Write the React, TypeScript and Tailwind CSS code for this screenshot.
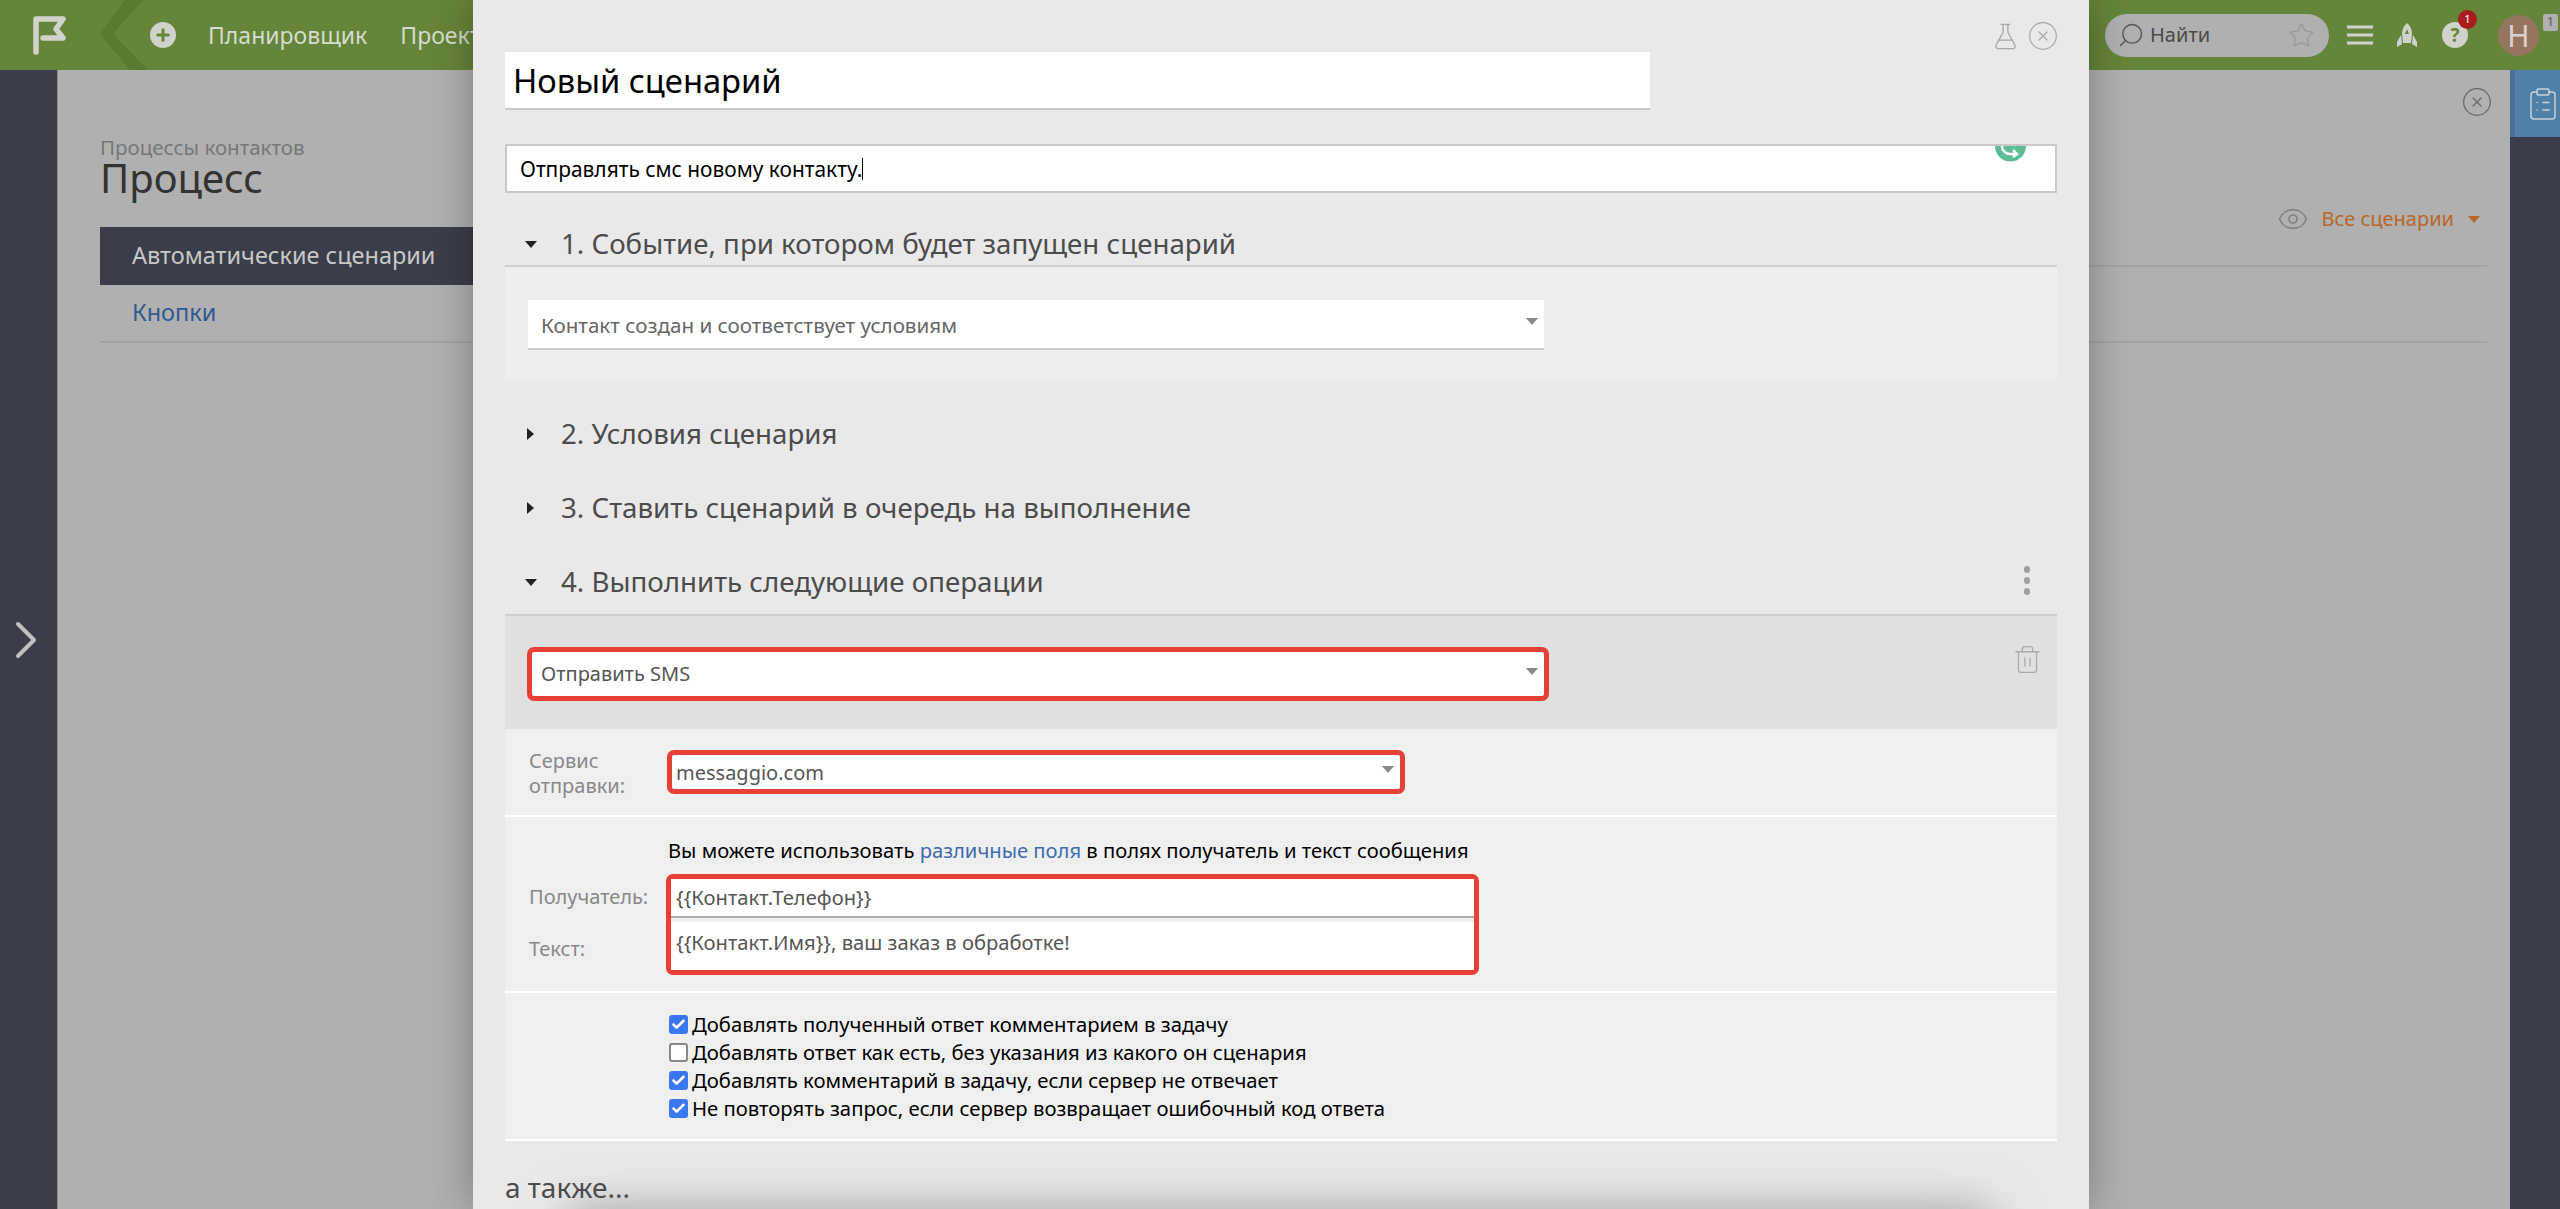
import { Plus, Search, Star, ChevronRight, Eye, CircleX, FlaskConical, ClipboardList, Trash2, Check } from "lucide-react";

const Caret = ({ open }: { open: boolean }) =>
  open ? (
    <span className="block w-0 h-0 border-x-[6px] border-x-transparent border-t-[7px] border-t-[#222]" />
  ) : (
    <span className="block w-0 h-0 ml-[2px] border-y-[6px] border-y-transparent border-l-[7px] border-l-[#222]" />
  );

const SelectArrow = () => (
  <span className="block w-0 h-0 border-x-[6px] border-x-transparent border-t-[7px] border-t-[#888]" />
);

const SectionHead = ({ title, open, border, tall }: { title: string; open: boolean; border?: boolean; tall?: boolean }) => (
  <div className={`flex items-center pl-[20px] ${tall ? "h-[55px] pb-[11px]" : "h-[44px]"} ${border ? "border-b-2 border-[#cfcfcf]" : ""}`}>
    <span className="w-[36px] flex"><Caret open={open} /></span>
    <span className="text-[27.700px] text-[#4c4c4c]">{title}</span>
  </div>
);

const checks = [
  { label: "Добавлять полученный ответ комментарием в задачу", on: true },
  { label: "Добавлять ответ как есть, без указания из какого он сценария", on: false },
  { label: "Добавлять комментарий в задачу, если сервер не отвечает", on: true },
  { label: "Не повторять запрос, если сервер возвращает ошибочный код ответа", on: true },
];

const Header = () => (
  <div className="h-[70px] bg-[#65853a] flex items-center relative text-[#d6dccd] text-[23px]">
    <div className="w-[473px] flex items-center overflow-hidden h-full relative">
      <svg width="34" height="40" viewBox="0 0 34 40" className="ml-[33px] shrink-0">
        <path d="M3 37V4h27l-7 10 7 9H10" fill="none" stroke="#d0d3cb" strokeWidth="5.5" strokeLinejoin="round" strokeLinecap="round" />
      </svg>
      <svg width="50" height="70" viewBox="0 0 50 70" className="shrink-0 ml-[33px]">
        <path d="M43 0L13 34 48 70H30L0 34 25 0z" fill="#5a7a32" />
      </svg>
      <span className="shrink-0 w-[26px] h-[26px] rounded-full bg-[#d0d3cb] flex items-center justify-center">
        <Plus size={18} strokeWidth={4} className="text-[#65853a]" />
      </span>
      <span className="ml-[32px] shrink-0">Планировщик</span>
      <span className="ml-[33px] shrink-0">Проекты</span>
    </div>
    <div className="ml-auto flex items-center h-full text-[20px]">
      <div className="w-[224px] h-[43px] rounded-full bg-[#b0b0b0] flex items-center pl-[12px] pr-[14px] text-[#4a4a4a]">
        <Search size={28} strokeWidth={1.2} className="-scale-x-100 text-[#555]" />
        <span className="ml-[5px]">Найти</span>
        <Star size={27} strokeWidth={1.2} className="ml-auto text-[#999]" />
      </div>
      <svg width="26" height="20" viewBox="0 0 26 20" className="ml-[18px]">
        <path d="M0 2h26M0 10h26M0 18h26" stroke="#d0d3cb" strokeWidth="3" />
      </svg>
      <svg width="20" height="25" viewBox="0 0 20 25" className="ml-[24px]">
        <path d="M10 0c3.500 3 5 7 5 11l-1 9H6l-1-9C5 7 6.500 3 10 0z" fill="#d0d3cb" />
        <path d="M4 12L0 19v5l5-3zM16 12l4 7v5l-5-3z" fill="#d0d3cb" />
        <path d="M10 6l2 5H8z" fill="#65853a" />
      </svg>
      <div className="relative ml-[25px] w-[26px] h-[26px] rounded-full bg-[#d0d3cb] flex items-center justify-center">
        <span className="text-[#65853a] font-bold text-[19px] leading-none">?</span>
        <span className="absolute -top-[12px] left-[16px] w-[19px] h-[19px] rounded-full bg-[#a91d1d] text-white text-[11px] flex items-center justify-center">1</span>
      </div>
      <div className="ml-[30px] w-[41px] h-[41px] rounded-full bg-[#96755f] text-[#d9d2cc] text-[30px] flex items-center justify-center">Н</div>
      <div className="ml-[4px] mb-[26px] mr-[2px] w-[15px] h-[17px] rounded-[2px] bg-[#b0b0b0] text-[#555] text-[12px] flex items-center justify-center">1</div>
    </div>
  </div>
);

const Modal = () => (
  <div className="absolute left-[473px] top-0 w-[1616px] h-[1209px] bg-[#e9e9e9] overflow-hidden px-[32px] shadow-[0_0_40px_rgba(0,0,0,0.3)]">
    <div className="absolute right-[30px] top-[20px] flex items-center gap-[7px] text-[#a8a8a8]">
      <FlaskConical size={29} strokeWidth={1.1} />
      <CircleX size={32} strokeWidth={0.9} />
    </div>

    <div className="mt-[52px] w-[1145px] h-[58px] bg-white border-b-2 border-[#c8c8c8] flex items-center pl-[8px] text-[32.700px] text-black">
      <span className="pt-[2px]">Новый сценарий</span>
    </div>

    <div className="relative mt-[34px] h-[49px] bg-white border-2 border-[#c9c9c9] flex items-center pl-[13px] text-[20.900px] text-black">
      <span className="pt-[2px]">Отправлять смс новому контакту.</span><span className="w-[1px] h-[22px] bg-black" />
      <svg width="31" height="16" viewBox="0 0 31 16" className="absolute right-[29px] top-0">
        <circle cx="15.500" cy="0" r="15.500" fill="#5cbd94" />
        <path d="M7 0a8 8 0 0 0 8 8h7M18 4l4 4-4 3" fill="none" stroke="#fff" strokeWidth="2.500" />
      </svg>
    </div>

    <div className="mt-[30px]"><SectionHead title="1. Событие, при котором будет запущен сценарий" open border /></div>
    <div className="h-[114px] bg-[#eeeeee] pt-[33px] pl-[23px]">
      <div className="w-[1016px] h-[50px] bg-white border-b-2 border-[#c8c8c8] flex items-center pl-[13px] pr-[6px] text-[20.600px] text-[#666] justify-between">
        <span className="pt-[3px]">Контакт создан и соответствует условиям</span><span className="mb-[5px]"><SelectArrow /></span>
      </div>
    </div>

    <div className="mt-[31px]"><SectionHead title="2. Условия сценария" open={false} /></div>
    <div className="mt-[30px]"><SectionHead title="3. Ставить сценарий в очередь на выполнение" open={false} /></div>

    <div className="mt-[31px] relative">
      <SectionHead title="4. Выполнить следующие операции" open border tall />
      <div className="absolute right-[27px] top-[5px] flex flex-col gap-[4px]">
        <span className="w-[6px] h-[7px] rounded-full bg-[#a0a0a0]" />
        <span className="w-[6px] h-[7px] rounded-full bg-[#a0a0a0]" />
        <span className="w-[6px] h-[7px] rounded-full bg-[#a0a0a0]" />
      </div>
    </div>

    <div className="relative h-[113px] bg-[#e0e0e0] pt-[31px] pl-[22px]">
      <div className="w-[1022px] h-[54px] bg-white border-[5px] border-[#e53f36] rounded-[7px] flex items-center justify-between pl-[9px] pr-[6px] text-[20px] text-[#555]">
        Отправить SMS<span className="mb-[5px]"><SelectArrow /></span>
      </div>
      <Trash2 size={31} strokeWidth={1} className="absolute right-[14px] top-[28px] text-[#aaa]" />
    </div>

    <div className="h-[88px] bg-[#efefef] border-b-2 border-white flex items-center pl-[24px]">
      <div className="w-[138px] text-[20px] leading-[25px] text-[#888] pt-[2px]">Сервис<br />отправки:</div>
      <div className="w-[738px] h-[44px] bg-white border-[5px] border-[#e53f36] rounded-[7px] flex items-center justify-between pl-[4px] pr-[6px] text-[20px] text-[#555]">
        <span className="pt-[2px]">messaggio.com</span><span className="mb-[5px]"><SelectArrow /></span>
      </div>
    </div>

    <div className="h-[176px] bg-[#efefef] border-b-2 border-white pl-[24px] pt-[20px]">
      <div className="ml-[139px] text-[20.200px] leading-[26px] text-black">
        Вы можете использовать <span className="text-[#3d6cb0]">различные поля</span> в полях получатель и текст сообщения
      </div>
      <div className="flex mt-[11px]">
        <div className="w-[137px] text-[20px] text-[#888] pt-[8px]">
          <div className="h-[52px]">Получатель:</div>
          <div>Текст:</div>
        </div>
        <div className="w-[813px] h-[101px] border-[5px] border-[#e53f36] rounded-[7px] bg-[#efefef] text-[20.200px] text-[#555]">
          <div className="h-[39px] bg-white border-b-2 border-[#aaa] flex items-center pl-[5px]">{"{{Контакт.Телефон}}"}</div>
          <div className="mt-[4px] h-[48px] bg-white pl-[5px] pt-[5px]">{"{{Контакт.Имя}}, ваш заказ в обработке!"}</div>
        </div>
      </div>
    </div>

    <div className="h-[148px] bg-[#efefef] border-b-2 border-white pl-[164px] pt-[17px]">
      {checks.map((c) => (
        <div key={c.label} className="flex items-center h-[28px] text-[20.300px] text-black">
          {c.on ? (
            <span className="w-[19px] h-[19px] rounded-[3px] bg-[#3b78f0] flex items-center justify-center mr-[4px]">
              <Check size={15} strokeWidth={4} className="text-white" />
            </span>
          ) : (
            <span className="w-[19px] h-[19px] rounded-[3px] bg-white border-2 border-[#888] mr-[4px]" />
          )}
          {c.label}
        </div>
      ))}
    </div>

    {/* тень от нижней панели */}
    <div className="absolute left-[90px] right-[90px] top-[1205px] h-[60px] rounded-[60px] bg-[#aaaaaa] blur-[22px]" />
    <div className="relative mt-[30px] text-[28px] leading-[32px] text-[#4c4c4c]">а также...</div>
  </div>
);

export default function App() {
  return (
    <div className="w-[2560px] h-[1209px] relative overflow-hidden bg-[#b0b0b0] font-['Noto_Sans','Open_Sans',sans-serif]">
      <Header />
      <div className="flex h-[1139px]">
        <div className="w-[58px] bg-[#3b3d4a] border-r border-[#8a8a8a] flex items-center justify-center">
          <ChevronRight size={64} strokeWidth={1.5} className="text-[#c0c0c0] -ml-[6px] shrink-0" />
        </div>

        <div className="flex-1 relative pl-[42px] pr-[23px] pt-[65px]">
          <div className="text-[20.500px] leading-[24px] text-[#777]">Процессы контактов</div>
          <div className="text-[40px] leading-[38px] text-[#333]">Процесс</div>
          <div className="mt-[30px] flex">
            <div className="w-[373px] shrink-0">
              <div className="h-[58px] bg-[#3b3d4a] text-[#c8c8c8] text-[23.500px] flex items-center pl-[32px] whitespace-nowrap">Автоматические сценарии</div>
              <div className="h-[58px] text-[#2f5a93] text-[23.500px] flex items-center pl-[32px] border-b-2 border-[#a3a3a3]">Кнопки</div>
            </div>
            <div className="flex-1 h-[116px]">
              <div className="h-[40px] border-b-2 border-[#a3a3a3]" />
              <div className="h-[76px] border-b-2 border-[#a3a3a3]" />
            </div>
          </div>

          <CircleX size={32} strokeWidth={0.9} className="absolute right-[17px] top-[16px] text-[#666]" />
          <div className="absolute right-[30px] top-[133px] flex items-center text-[20px] text-[#b8672a]">
            <Eye size={32} strokeWidth={1.2} className="text-[#808080] mr-[13px]" />
            Все сценарии
            <span className="ml-[14px] block w-0 h-0 border-x-[6px] border-x-transparent border-t-[7px] border-t-[#b8672a]" />
          </div>
        </div>

        <div className="w-[50px] bg-[#3b3d4a]">
          <div className="h-[67px] bg-[#4f80a8] border-l-[5px] border-[#47719a] flex items-center pl-[10px]">
            <ClipboardList size={36} strokeWidth={1} className="text-[#c6d2dc] shrink-0" />
          </div>
        </div>
      </div>
      <Modal />
    </div>
  );
}
